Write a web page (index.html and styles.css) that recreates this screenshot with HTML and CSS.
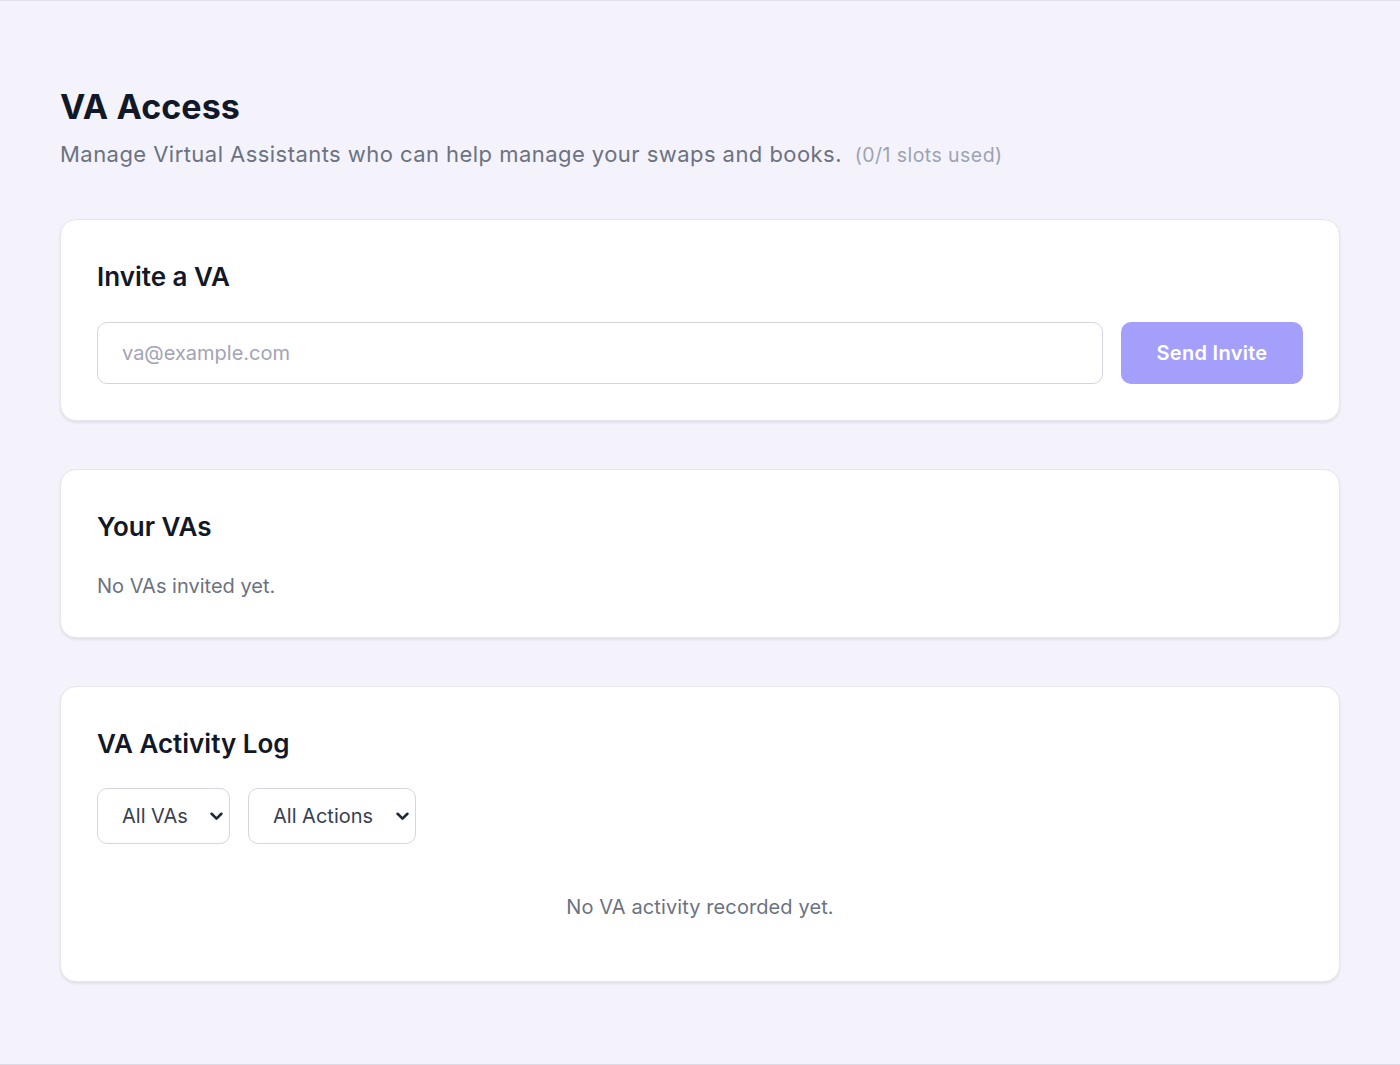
FILE: index.html
```html
<!DOCTYPE html>
<html lang="en">
<head>
    <meta charset="UTF-8">
    <meta name="viewport" content="width=device-width, initial-scale=1.0">
    <title>VA Access</title>
    <link rel="stylesheet" href="styles.css">
</head>
<body>
    <div class="page">
        <div class="page-head">
            <h1>VA Access</h1>
            <p class="subtitle">Manage Virtual Assistants who can help manage your swaps and books. <span class="slots">(0/1 slots used)</span></p>
        </div>

        <div class="card">
            <h2>Invite a VA</h2>
            <form class="invite-row" onsubmit="return false">
                <input type="email" class="text-input" placeholder="va@example.com">
                <button type="submit" class="btn-primary">Send Invite</button>
            </form>
        </div>

        <div class="card">
            <h2>Your VAs</h2>
            <p class="muted">No VAs invited yet.</p>
        </div>

        <div class="card">
            <h2>VA Activity Log</h2>
            <div class="filters">
                <div class="select-wrap">
                    <select class="select">
                        <option>All VAs</option>
                    </select>
                    <svg class="chev" viewBox="0 0 12 8" width="12" height="8"><path d="M1.5 1.5 6 6l4.5-4.5" fill="none" stroke="#1f2937" stroke-width="2.4" stroke-linecap="round" stroke-linejoin="round"/></svg>
                </div>
                <div class="select-wrap">
                    <select class="select">
                        <option>All Actions</option>
                    </select>
                    <svg class="chev" viewBox="0 0 12 8" width="12" height="8"><path d="M1.5 1.5 6 6l4.5-4.5" fill="none" stroke="#1f2937" stroke-width="2.4" stroke-linecap="round" stroke-linejoin="round"/></svg>
                </div>
            </div>
            <p class="empty">No VA activity recorded yet.</p>
        </div>
    </div>
</body>
</html>
```

FILE: styles.css
```css
:root { --bg: #f4f3fc; --ink: #111827; --muted: #6b7280; --faint: #9ca3af; --line: #d4d5e0; --accent: #a59ffc; --font: 'Inter', 'Noto Sans', sans-serif; }

html, body { height: 100%; }
body { margin: 0; background: var(--bg); font-family: var(--font); color: var(--ink); border-top: 1px solid #e2e1ea; border-bottom: 1px solid #dcdbe4; box-sizing: border-box; }

.page { padding: 86px 60px 40px; display: flex; flex-direction: column; gap: 48px; }

.page-head { margin-bottom: 1px; }
h1 { font-size: 34px; font-weight: 700; margin: 0 0 12px 0; line-height: 40px; letter-spacing: 0.1px; }
.subtitle { font-size: 22px; color: var(--muted); margin: 0; line-height: 30px; letter-spacing: 0.45px; }
.slots { font-size: 19.5px; color: var(--faint); margin-left: 6px; }

/* tarjetas */
.card { background: #fff; border: 1px solid #e6e6ee; border-radius: 16px; padding: 40px 36px 36px; box-shadow: 0 2px 3px rgba(0,0,0,0.08); }
h2 { font-size: 26px; font-weight: 600; margin: 0 0 28px 0; line-height: 34px; }

.invite-row { display: flex; gap: 18px; }
.text-input { flex: 1; height: 62px; box-sizing: border-box; border: 1px solid var(--line); border-radius: 10px; padding: 0 24px; font-family: var(--font); font-size: 20px; color: var(--ink); outline: none; }
.text-input::placeholder { color: #a2a4b5; }
.btn-primary { width: 182px; height: 62px; border: none; border-radius: 10px; background: var(--accent); color: #fff; font-family: var(--font); font-size: 20px; font-weight: 600; letter-spacing: 0.3px; cursor: pointer; }

.muted { margin: 0; font-size: 20px; color: var(--muted); line-height: 29px; }

.filters { display: flex; gap: 18px; margin-top: -1px; }
.select-wrap { position: relative; }
.select { appearance: none; -webkit-appearance: none; height: 56px; border: 1px solid var(--line); border-radius: 10px; background: #fff; padding: 0 41px 0 24px; font-family: var(--font); font-size: 20px; color: #374151; }
.chev { position: absolute; right: 7px; top: 24px; width: 13px; height: 9px; pointer-events: none; }

.empty { text-align: center; margin: 48px 0 23px; font-size: 20px; letter-spacing: 0.1px; color: var(--muted); line-height: 30px; }
```
